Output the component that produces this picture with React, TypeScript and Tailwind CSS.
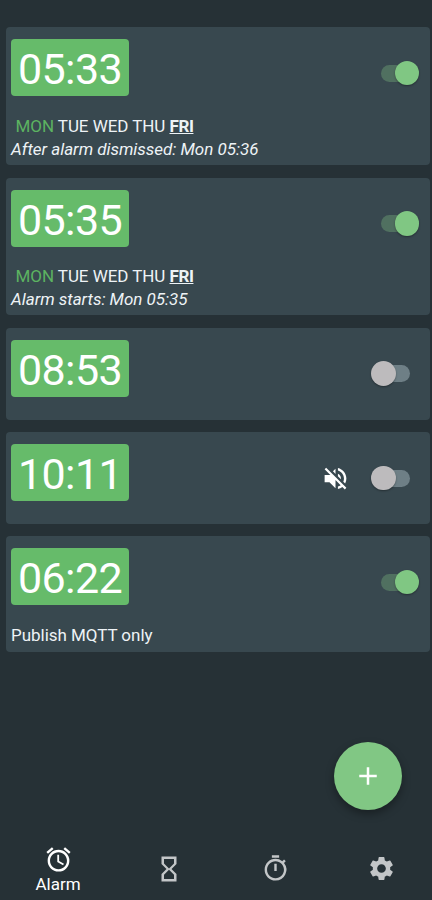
import React from "react";
import { MdAdd, MdAlarm, MdHourglassEmpty, MdOutlineTimer, MdSettings, MdVolumeOff } from "react-icons/md";

type Alarm = {
  time: string;
  on: boolean;
  size: string;
  days?: boolean;
  muted?: boolean;
  note?: string;
  italic?: boolean;
};

const alarms: Alarm[] = [
  { time: "05:33", on: true, size: "h-[138px] mb-[12.5px]", days: true, note: "After alarm dismissed: Mon 05:36", italic: true },
  { time: "05:35", on: true, size: "h-[137.5px] mb-[12.5px]", days: true, note: "Alarm starts: Mon 05:35", italic: true },
  { time: "08:53", on: false, size: "h-[92.5px] mb-[12px]" },
  { time: "10:11", on: false, size: "h-[92px] mb-[12px]", muted: true },
  { time: "06:22", on: true, size: "h-[115.5px]", note: "Publish MQTT only" },
];

function Toggle({ on }: { on: boolean }) {
  return (
    <div className="flex w-[39px] items-center">
      <div
        className={
          on
            ? "flex h-[17px] w-[34px] items-center justify-end rounded-full bg-[#507060]"
            : "ml-[-7px] flex h-[17px] w-[36px] items-center rounded-full bg-[#6e7f86]"
        }
      >
        <div
          className={
            on
              ? "mr-[-4px] size-[24.5px] shrink-0 rounded-full bg-[#80c783] shadow-[0_1px_2px_rgba(0,0,0,0.35)]"
              : "ml-[-3px] size-[24.5px] shrink-0 rounded-full bg-[#bdbbbd] shadow-[0_1px_2px_rgba(0,0,0,0.35)]"
          }
        />
      </div>
    </div>
  );
}

function AlarmCard({ alarm }: { alarm: Alarm }) {
  return (
    <section className={`${alarm.size} ml-[5.5px] w-[424px] shrink-0 rounded-[4px] bg-[#38484f] pl-[5.5px] pt-[12px]`}>
      <div className="flex h-[57px] justify-between">
        <div className="flex h-[57px] w-[118px] items-center justify-center rounded-[4px] bg-[#66bb6a] pt-[4px] text-[43px] leading-none tracking-[-0.6px] text-white">
          {alarm.time}
        </div>
        <div className="mr-[9.5px] mt-[11px] flex h-[46px] items-center">
          {alarm.muted && <MdVolumeOff className="mr-[31.5px] size-[29px] text-white" />}
          <Toggle on={alarm.on} />
        </div>
      </div>
      {alarm.days && (
        <div className="mt-[18.5px] whitespace-pre pl-[4.5px] text-[17px] leading-[22px] tracking-[-0.06px]">
          <span className="text-[#5cb361]">MON</span> TUE WED THU{" "}
          <span className="font-bold tracking-[-0.4px] underline">FRI</span>
        </div>
      )}
      {alarm.note && (
        <div
          className={
            alarm.italic
              ? "mt-[1px] text-[17px] italic leading-[22px] tracking-[-0.03px]"
              : "mt-[19px] text-[17px] leading-[22px] tracking-[-0.03px]"
          }
        >
          {alarm.note}
        </div>
      )}
    </section>
  );
}

export default function App() {
  return (
    <main className="relative flex h-[900px] w-[432px] flex-col overflow-hidden bg-[#263136] pt-[27px] font-[Roboto,sans-serif] text-[#eef3f6]">
      {alarms.map((alarm) => (
        <AlarmCard key={alarm.time} alarm={alarm} />
      ))}
      <button className="absolute left-[334px] top-[742px] flex size-[68px] items-center justify-center rounded-full bg-[#81c784] text-white shadow-[0_4px_8px_rgba(0,0,0,0.35)]">
        <MdAdd className="size-[30px]" />
      </button>
      <nav className="mt-auto flex h-[64px] pl-[5px] text-[#c3c6c8]">
        <div className="flex w-[106px] shrink-0 flex-col items-center pt-[9px] text-white">
          <MdAlarm className="size-[29px]" />
          <span className="mt-[-1px] text-[17px] leading-[22px]">Alarm</span>
        </div>
        <div className="flex w-[116px] shrink-0 justify-center pt-[18px]">
          <MdHourglassEmpty className="size-[30px]" />
        </div>
        <div className="flex w-[96px] shrink-0 justify-center pt-[18px]">
          <MdOutlineTimer className="size-[29px]" />
        </div>
        <div className="flex w-[116px] shrink-0 justify-center pt-[18px]">
          <MdSettings className="size-[29px]" />
        </div>
      </nav>
    </main>
  );
}
